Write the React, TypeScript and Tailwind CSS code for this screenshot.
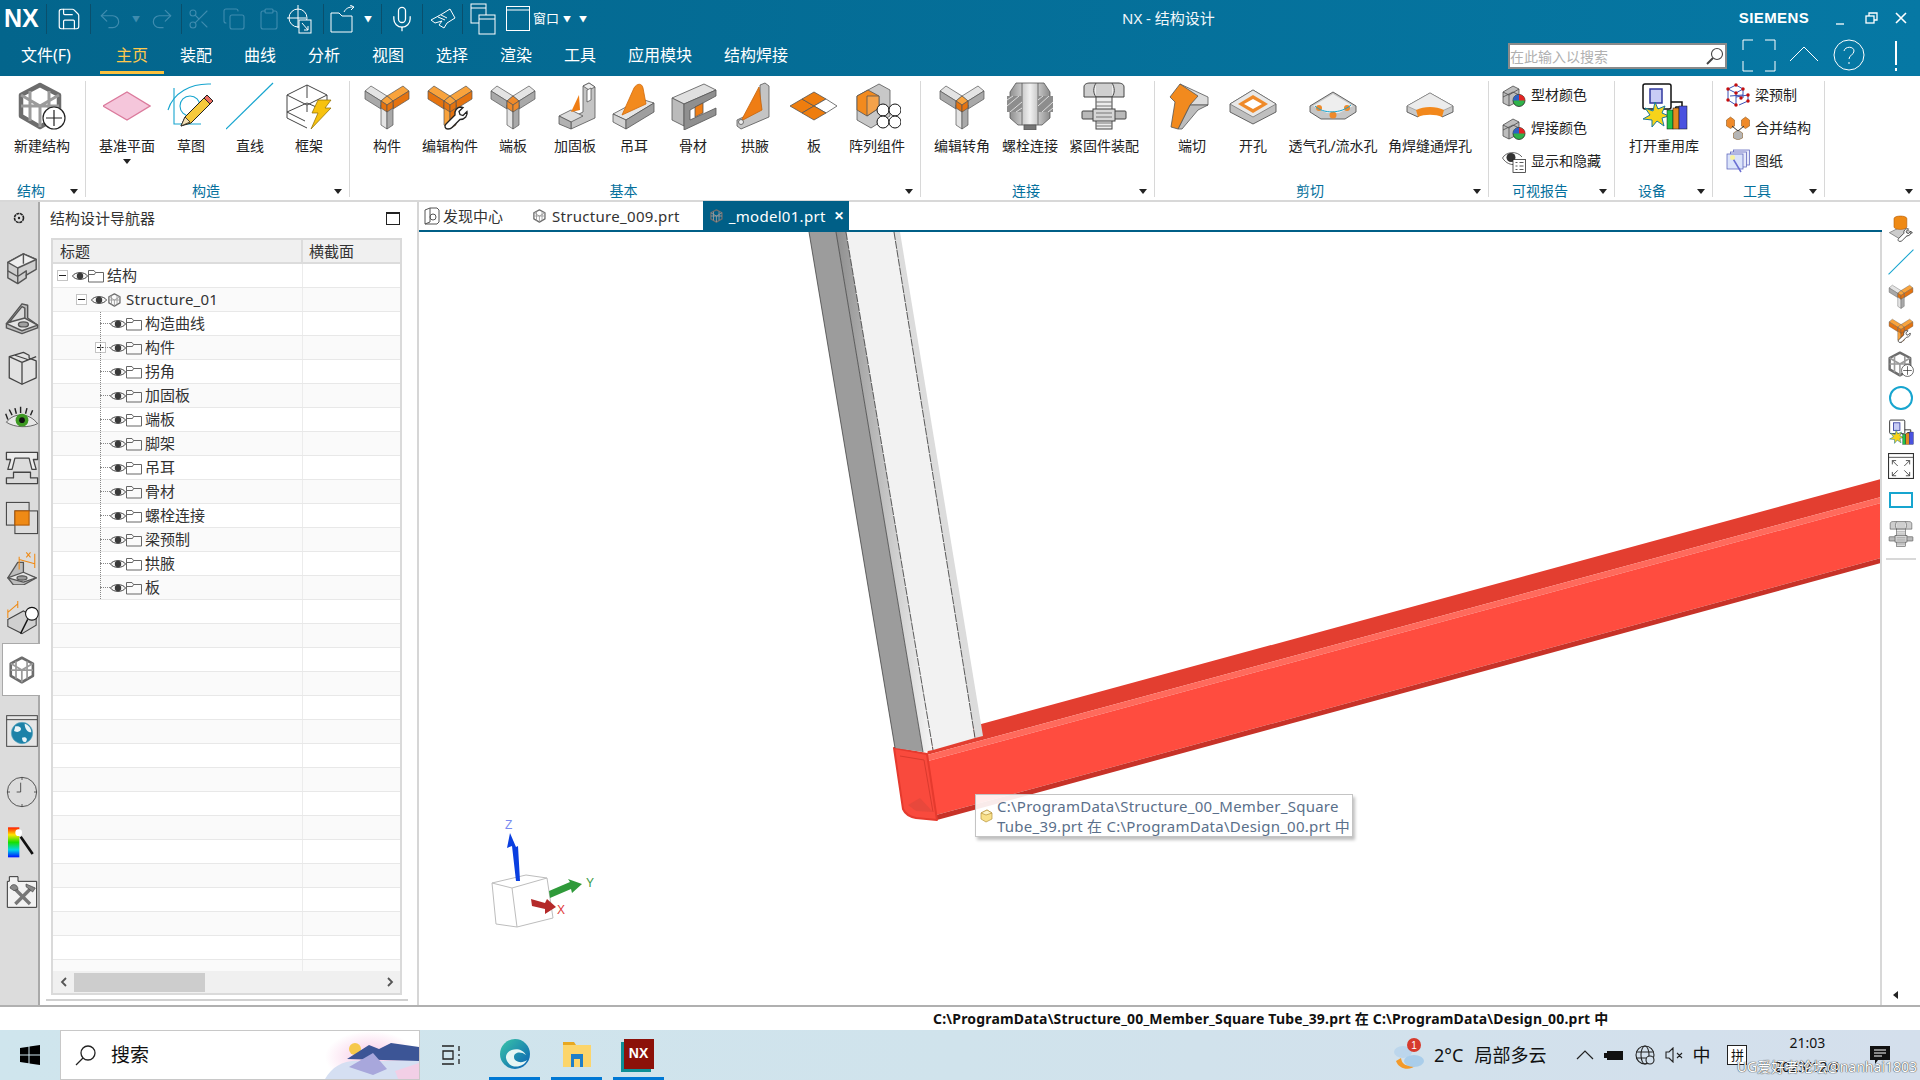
import type { ReactNode } from 'react';
import { Clipboard, Copy, Mic, Redo2, Save, Scissors, Undo2 } from 'lucide-react';

type Sz = { size?: number };

const ORANGE = ['#f9a33c', '#e5730f'];
const GRAY = ['#e4e4e4', '#a9a9a9'];

function Svg({ size = 48, children }: Sz & { children: ReactNode }) {
  return (
    <svg width={size} height={size} viewBox="0 0 48 48" className="shrink-0">
      {children}
    </svg>
  );
}

function YIcon({ left = GRAY, right = GRAY, down = GRAY, node = GRAY, wrench = false, size }: Sz & { left?: string[]; right?: string[]; down?: string[]; node?: string[]; wrench?: boolean }) {
  return (
    <Svg size={size}>
      <g stroke="#555" strokeWidth=".7" strokeLinejoin="round">
        <polygon points="2,9 8,4 24,14 18,19" fill={left[0]} />
        <polygon points="2,9 18,19 18,27 2,17" fill={left[1]} />
        <polygon points="46,9 40,4 24,14 30,19" fill={right[0]} />
        <polygon points="46,9 46,17 30,27 30,19" fill={right[1]} />
        <polygon points="18,23 24,27 24,47 18,43" fill={down[0]} />
        <polygon points="24,27 30,23 30,43 24,47" fill={down[1]} />
        <polygon points="18,19 24,14 30,19 24,23" fill={node[0]} />
        <polygon points="18,19 24,23 24,30 18,26" fill={node[1]} />
        <polygon points="24,23 30,19 30,26 24,30" fill={node[1]} />
      </g>
      {wrench && <WrenchMark />}
    </Svg>
  );
}

function WrenchMark() {
  return (
    <path d="M22 47c-3 0-4-3-2-5l9-9c-1-4 2-8 6-8l2 .5-4 4 1 3 3 1 4-4c1 4-2 8-7 8l-8 8c-1 1-2 1.500-4 1.500z" fill="#fff" stroke="#222" strokeWidth="1.300" />
  );
}

function FrameIcon({ plus = false, size }: Sz & { plus?: boolean }) {
  return (
    <Svg size={size}>
      <g fill="none" stroke="#6d6d6d" strokeWidth="4.500" strokeLinejoin="round">
        <path d="M22 3L41 13V34L22 45L3 34V13Z" />
      </g>
      <g fill="none" stroke="#9b9b9b" strokeWidth="3">
        <path d="M3 13L22 24L41 13M22 24V45M12 9V39M31 9V39M3 24H41" />
      </g>
      {plus && (
        <g>
          <circle cx="36" cy="36" r="11" fill="#fff" stroke="#222" strokeWidth="1.200" />
          <path d="M36 28V44M28 36H44" stroke="#222" strokeWidth="1.200" />
        </g>
      )}
    </Svg>
  );
}

const PlaneIcon = () => (
  <Svg>
    <polygon points="0,24 24,10 47,24 24,38" fill="#f5c6db" stroke="#db7a9c" strokeWidth="1.400" />
  </Svg>
);

const SketchIcon = () => (
  <Svg>
    <g fill="none" stroke="#17a5cf" strokeWidth="1.100">
      <path d="M1 28C6 11 24 1 44 2" />
      <circle cx="23" cy="24" r="10" />
      <path d="M7 6V42H34" />
    </g>
    <polygon points="14,44 18,35 37,16 43,22 24,41" fill="#f6c93c" stroke="#222" strokeWidth="1" />
    <polygon points="37,16 40,13 46,19 43,22" fill="#ec6d62" stroke="#222" strokeWidth="1" />
    <polygon points="14,44 18,35 23,40" fill="#f2e0b6" stroke="#222" strokeWidth=".8" />
  </Svg>
);

const LineIcon = () => (
  <Svg>
    <path d="M0 47L47 1" stroke="#17a5cf" strokeWidth="1.200" />
  </Svg>
);

const WireIcon = () => (
  <Svg>
    <g fill="none" stroke="#444" strokeWidth="1">
      <path d="M2 13L22 3L42 13L42 19M2 13V36L22 46M2 13L22 23L42 13M22 23V30M22 3V16M2 30L22 21L36 27M2 30L20 39" />
    </g>
    <polygon points="33,18 46,18 40,26 46,26 26,47 33,31 27,31" fill="#f7c20f" stroke="#8a6a00" strokeWidth=".7" />
  </Svg>
);

const GussetIcon = () => (
  <Svg>
    <g stroke="#555" strokeWidth=".8">
      <polygon points="32,4 38,1 44,5 44,36 20,47 20,36 32,30" fill="#c4c4c4" />
      <polygon points="32,4 38,8 44,5 38,1" fill="#eeeeee" />
      <polygon points="36,8 40,6 40,18 36,20" fill="#fff" />
      <polygon points="8,34 20,28 32,34 20,40" fill="#ddd" />
      <polygon points="8,34 20,40 20,47 8,42" fill="#b2b2b2" />
      <polygon points="20,30 28,13 29,28" fill="#ef7d14" stroke="none" />
    </g>
  </Svg>
);

const LugIcon = () => (
  <Svg>
    <g stroke="#555" strokeWidth=".8">
      <polygon points="3,32 31,17 44,21 16,38" fill="#e6e6e6" />
      <polygon points="3,32 16,38 16,47 3,40" fill="#d2d2d2" />
      <polygon points="16,38 44,21 44,30 16,47" fill="#9f9f9f" />
      <path d="M12 33L24 6C27 1 32 1 33 6L36 22Z" fill="#f28a1e" stroke="#d06a0a" />
    </g>
  </Svg>
);

const BeamIcon = () => (
  <Svg>
    <g stroke="#555" strokeWidth=".8">
      <polygon points="3,16 35,2 47,8 15,22" fill="#e0e0e0" />
      <polygon points="3,16 15,22 15,44 3,38" fill="#bbb" />
      <polygon points="15,22 47,8 47,14 21,28 21,38 47,26 47,33 15,48" fill="#8f8f8f" />
      <polygon points="26,25 34,21 34,31 26,35" fill="#ef7d14" />
    </g>
  </Svg>
);

const HaunchIcon = () => (
  <Svg>
    <g stroke="#555" strokeWidth=".8">
      <polygon points="29,3 34,1 38,4 38,35 10,47 6,44 6,38 29,27" fill="#c4c4c4" />
      <polygon points="10,39 28,5 31,28" fill="#ef7d14" stroke="#c5630a" />
      <circle cx="10" cy="40" r="2.500" fill="#eee" />
    </g>
  </Svg>
);

const PlateIcon = () => (
  <Svg>
    <g stroke="#555" strokeWidth=".8">
      <polygon points="0,24 12,17 24,24 12,31" fill="#ee7d0e" />
      <polygon points="12,17 24,10 36,17 24,24" fill="#ee7d0e" />
      <polygon points="24,24 36,17 47,24 36,31" fill="#fff" />
      <polygon points="12,31 24,24 36,31 24,38" fill="#ee7d0e" />
    </g>
  </Svg>
);

const ArrayIcon = () => (
  <Svg>
    <g stroke="#555" strokeWidth=".8">
      <polygon points="4,14 26,2 37,8 37,34 18,46 4,38" fill="#c8c8c8" />
      <polygon points="4,14 15,8 26,14 26,26 14,34 4,28" fill="#f28a1e" />
      <polygon points="14,14 26,14 26,26 14,34" fill="#f4a24a" />
    </g>
    <g fill="#fff" stroke="#111" strokeWidth="1">
      <circle cx="30" cy="28" r="6" />
      <circle cx="42" cy="28" r="6" />
      <circle cx="30" cy="40" r="6" />
      <circle cx="42" cy="40" r="6" />
    </g>
  </Svg>
);

const ConnectIcon = () => (
  <Svg>
    <defs>
      <linearGradient id="bolt-g" x1="0" x2="1" y1="0" y2="0">
        <stop offset="0" stopColor="#8f8f8f" />
        <stop offset=".5" stopColor="#f1f1f1" />
        <stop offset="1" stopColor="#8a8a8a" />
      </linearGradient>
    </defs>
    <g stroke="#555" strokeWidth=".8">
      <polygon points="10,1 38,1 44,10 44,36 36,43 12,43 4,36 4,10" fill="url(#bolt-g)" />
      <rect x="18" y="43" width="12" height="5" fill="#777" />
      <path d="M16 1V43M32 1V43" fill="none" />
    </g>
    <rect x="1" y="14" width="15" height="16" fill="#8d8d8d" />
    <rect x="32" y="14" width="15" height="16" fill="#8d8d8d" />
    <path d="M1 18L7 14M1 24L13 14M4 30L16 20M10 30L16 26M32 18L37 14M32 24L43 14M36 30L47 20M42 30L47 26" stroke="#ddd" strokeWidth="1" />
  </Svg>
);

function FastenerIcon({ size }: Sz) {
  return (
    <Svg size={size}>
      <g stroke="#444" strokeWidth="1">
        <path d="M4 15V5C4 2 7 1 10 1H38C41 1 44 2 44 5V15Z" fill="#cfcfcf" />
        <path d="M16 1C13 6 13 11 16 15M32 1C35 6 35 11 32 15" fill="#ececec" />
        <rect x="16" y="15" width="16" height="32" fill="#ececec" />
        <rect x="2" y="29" width="44" height="8" rx="1" fill="#b9b9b9" />
        <rect x="13" y="27" width="22" height="12" fill="#d6d6d6" />
      </g>
      <path d="M16 20H32M16 24H32M16 31H32M16 35H32M16 41H32M16 44H32" stroke="#777" />
    </Svg>
  );
}

const EndCutIcon = () => (
  <Svg>
    <g stroke="#555" strokeWidth=".8">
      <polygon points="12,2 40,15 40,23 22,23" fill="#dcdcdc" />
      <polygon points="22,23 40,23 30,28 14,47 10,47" fill="#bdbdbd" />
      <polygon points="2,15 12,2 30,14 22,23 10,47 3,45 7,20" fill="#f28a1e" />
    </g>
  </Svg>
);

const HoleIcon = () => (
  <Svg>
    <polygon points="1,22 24,8 47,22 47,30 24,42 1,30" fill="#bfbfbf" stroke="#555" strokeWidth=".9" />
    <polygon points="1,22 24,8 47,22 24,35" fill="#e8e8e8" stroke="#555" strokeWidth=".6" />
    <polygon points="9,22 24,13 39,22 24,31" fill="#ef8a2a" />
    <polygon points="15,22 24,17 33,22 24,27" fill="#fff" />
  </Svg>
);

const VentIcon = () => (
  <Svg>
    <polygon points="1,24 24,10 47,24 47,30 36,37 12,37 1,30" fill="#c6c6c6" stroke="#555" strokeWidth=".9" />
    <polygon points="4,24 24,12 44,24 30,31 18,31" fill="#eeeeee" />
    <circle cx="10" cy="26" r="3" fill="#ef8a2a" />
    <circle cx="24" cy="33" r="3.500" fill="#ef8a2a" />
    <circle cx="38" cy="26" r="3" fill="#ef8a2a" />
    <path d="M6 24C14 32 32 32 42 23" fill="none" stroke="#17a5cf" strokeWidth="1" />
  </Svg>
);

const WeldHoleIcon = () => (
  <Svg>
    <polygon points="1,24 24,11 47,24 47,30 36,35 32,29 16,29 12,35 1,30" fill="#c9c9c9" stroke="#555" strokeWidth=".9" />
    <polygon points="1,24 24,11 47,24 36,29 12,29" fill="#ececec" stroke="#777" strokeWidth=".5" />
    <path d="M10 28C18 24 30 24 38 28L36 35C30 32 18 32 12 35Z" fill="#f2881c" />
  </Svg>
);

function PieCubes() {
  return (
    <Svg size={24}>
      <g stroke="#444" strokeWidth="1.500">
        <polygon points="2,18 22,6 34,12 34,36 14,46 2,40" fill="#bdbdbd" />
        <path d="M2 28L22 18L34 24M14 24V46M2 18L14 24L34 12" fill="none" />
      </g>
      <circle cx="34" cy="35" r="12" fill="#2fb24a" stroke="#222" strokeWidth="1.500" />
      <path d="M34 35V23A12 12 0 0 1 46 35Z" fill="#e32424" />
      <path d="M34 35L22 35A12 12 0 0 1 34 23Z" fill="#2f5fc4" />
    </Svg>
  );
}

function EyeList() {
  return (
    <Svg size={24}>
      <path d="M1 18C8 5 30 3 40 16" fill="none" stroke="#333" strokeWidth="1.500" />
      <path d="M1 18C8 29 18 32 26 31" fill="none" stroke="#333" strokeWidth="1.500" />
      <circle cx="18" cy="17" r="9" fill="#333" />
      <rect x="22" y="21" width="25" height="26" fill="#fff" stroke="#222" strokeWidth="1.500" />
      <path d="M27 27H31M35 27H43M27 34H31M35 34H43M27 41H31M35 41H43" stroke="#222" strokeWidth="1.500" />
    </Svg>
  );
}

function Lattice() {
  return (
    <Svg size={24}>
      <g fill="none" stroke="#3c50b4" strokeWidth="2">
        <path d="M4 12L20 4L34 12L20 20ZM4 12V34L20 44V20M34 12V30M20 28L44 24V36L26 44M8 26L34 24" />
      </g>
      <g fill="#c40d0d">
        <circle cx="4" cy="12" r="3.500" />
        <circle cx="20" cy="4" r="3.500" />
        <circle cx="34" cy="12" r="3.500" />
        <circle cx="20" cy="20" r="3.500" />
        <circle cx="4" cy="34" r="3.500" />
        <circle cx="20" cy="44" r="3.500" />
        <circle cx="44" cy="24" r="3.500" />
        <circle cx="44" cy="36" r="3.500" />
        <circle cx="30" cy="30" r="3.500" />
      </g>
    </Svg>
  );
}

function MergeCubes() {
  return (
    <Svg size={24}>
      <g stroke="#7a4a10" strokeWidth="1">
        <polygon points="1,8 9,2 17,8 17,20 9,25 1,20" fill="#ef8a2a" />
        <polygon points="31,8 39,2 47,8 47,20 39,25 31,20" fill="#ef8a2a" />
        <polygon points="15,34 24,28 33,34 33,44 24,48 15,44" fill="#b5b5b5" />
      </g>
      <path d="M12 20L24 30L36 20" fill="none" stroke="#333" strokeWidth="2" />
    </Svg>
  );
}

function Sheets() {
  return (
    <Svg size={24}>
      <g stroke="#5a62bb" strokeWidth="1.500" fill="#e8ebfa">
        <rect x="15" y="2" width="32" height="30" />
        <rect x="9" y="6" width="32" height="30" />
        <rect x="2" y="10" width="32" height="30" fill="#dbe4fb" />
      </g>
      <path d="M12 16L30 46" stroke="#6a6fd2" strokeWidth="3" />
      <circle cx="13" cy="17" r="5" fill="#f7f2a0" />
    </Svg>
  );
}

const LibraryIcon = ({ size }: Sz) => (
  <Svg size={size}>
    <rect x="3" y="2" width="28" height="25" rx="2" fill="#fff" stroke="#111" strokeWidth="1.500" />
    <rect x="10" y="7" width="12" height="14" fill="#c8ccf5" stroke="#30389e" strokeWidth="1.500" />
    <path d="M31 20H42V25H36L33 31" fill="none" stroke="#111" strokeWidth="1.500" />
    <polygon points="15,20 18,27 25,24 22,31 29,34 22,36 24,44 17,39 12,45 12,38 3,37 10,33 5,26 13,29" fill="#f7d31a" stroke="#157a9e" strokeWidth="1" />
    <rect x="27" y="28" width="6" height="19" fill="#23c24a" stroke="#111" strokeWidth=".5" />
    <rect x="33" y="26" width="6" height="21" fill="#e48a1f" stroke="#111" strokeWidth=".5" />
    <rect x="39" y="24" width="8" height="23" fill="#4a52e0" stroke="#111" strokeWidth=".5" />
  </Svg>
);

function Tool({ label, w, icon, drop }: { label: string; w: string; icon: ReactNode; drop?: boolean }) {
  return (
    <div className={`flex flex-col items-center ${w}`}>
      <div className="mt-px flex h-[48px] w-full items-center justify-center">{icon}</div>
      <div className="mt-[6px] h-[20px] whitespace-nowrap text-[14px] leading-[20px] text-[#222]">{label}</div>
      {drop && <div className="mt-[3px] h-0 w-0 border-x-[4px] border-t-[5px] border-x-transparent border-t-[#222]" />}
    </div>
  );
}

function Group({ label, w, pad, children, noCaret }: { label: string; w: string; pad: string; children: ReactNode; noCaret?: boolean }) {
  return (
    <div className={`mt-[5px] flex h-[116px] shrink-0 flex-col border-r border-[#d8d8d8] ${w}`}>
      <div className={`flex min-h-0 flex-1 ${pad}`}>{children}</div>
      <div className="flex h-[16px] translate-y-[2px] items-center">
        <div className="flex-1 text-center text-[14px] leading-[16px] text-[#046f9c]">{label}</div>
        <div className="flex w-[23px] justify-center">
          {!noCaret && <div className="h-0 w-0 border-x-[4px] border-t-[5px] border-x-transparent border-t-[#222]" />}
        </div>
      </div>
    </div>
  );
}

function SmallTool({ label, icon }: { label: string; icon: ReactNode }) {
  return (
    <div className="flex h-[33px] shrink-0 items-center gap-[5px] whitespace-nowrap text-[14px] text-[#222]">
      {icon}
      <span>{label}</span>
    </div>
  );
}

const menus = [
  { t: '主页', w: 'w-[64px] text-[#ffc94d] border-[#fcc13e]' },
  { t: '装配', w: 'w-[64px] border-transparent' },
  { t: '曲线', w: 'w-[64px] border-transparent' },
  { t: '分析', w: 'w-[64px] border-transparent' },
  { t: '视图', w: 'w-[64px] border-transparent' },
  { t: '选择', w: 'w-[64px] border-transparent' },
  { t: '渲染', w: 'w-[64px] border-transparent' },
  { t: '工具', w: 'w-[64px] border-transparent' },
  { t: '应用模块', w: 'w-[96px] border-transparent' },
  { t: '结构焊接', w: 'w-[96px] border-transparent' },
];

function TitleBar() {
  const sep = <div className="h-[30px] w-px shrink-0 bg-[#0a4f6c]" />;
  const dim = '#3f8caf';
  return (
    <div className="flex h-[40px] items-center whitespace-nowrap pb-[3px] text-white">
      <div className="w-[46px] shrink-0 pl-[4px] font-['Liberation_Sans'] text-[25px] font-bold leading-none">NX</div>
      {sep}
      <div className="flex w-[43px] shrink-0 justify-center"><Save size={26} strokeWidth={1.1} /></div>
      {sep}
      <div className="flex w-[90px] shrink-0 items-center justify-between px-[6px]" style={{ color: dim }}>
        <Undo2 size={26} strokeWidth={1.1} />
        <span className="text-[8px]">▼</span>
        <Redo2 size={26} strokeWidth={1.1} />
      </div>
      {sep}
      <div className="flex w-[104px] shrink-0 items-center justify-around" style={{ color: dim }}>
        <Scissors size={24} strokeWidth={1.1} />
        <Copy size={24} strokeWidth={1.1} />
        <Clipboard size={24} strokeWidth={1.1} />
      </div>
      <div className="flex w-[37px] shrink-0 justify-start">
        <svg width="26" height="30" viewBox="0 0 26 30" fill="none" stroke="#fff" strokeWidth="1">
          <circle cx="12" cy="14" r="9" />
          <path d="M12 1V24M1 14H20" />
          <rect x="13" y="16" width="12" height="13" fill="#04678f" />
          <path d="M16 19L22 26M22 22V26H18" />
        </svg>
      </div>
      {sep}
      <div className="flex w-[57px] shrink-0 items-center justify-between pl-[6px] pr-[9px]">
        <svg width="26" height="28" viewBox="0 0 26 28" fill="none" stroke="#fff" strokeWidth="1">
          <path d="M1 8V27H22V11H12L9 8ZM14 7C16 3 19 2 23 2M20 0L24 2L21 5" />
        </svg>
        <span className="text-[8px]">▼</span>
      </div>
      {sep}
      <div className="flex w-[40px] shrink-0 justify-center"><Mic size={28} strokeWidth={1.1} /></div>
      {sep}
      <div className="flex w-[39px] shrink-0 justify-center">
        <svg width="26" height="22" viewBox="0 0 26 22" fill="none" stroke="#fff" strokeWidth="1">
          <path d="M1 12L12 6L20 1L25 10L17 15L14 20L9 17L12 13L5 15Z" />
          <path d="M8 9L15 12M11 7L17 10" />
        </svg>
      </div>
      {sep}
      <div className="flex w-[40px] shrink-0 justify-center">
        <svg width="26" height="32" viewBox="0 0 26 32" fill="none" stroke="#fff" strokeWidth="1">
          <rect x="1" y="1" width="15" height="19" fill="#04678f" />
          <path d="M1 5H16" />
          <rect x="9" y="12" width="16" height="19" fill="#04678f" />
          <path d="M9 16H25" />
        </svg>
      </div>
      <div className="flex w-[27px] shrink-0 justify-end">
        <svg width="24" height="25" viewBox="0 0 24 25" fill="none" stroke="#fff" strokeWidth="1">
          <rect x=".5" y=".5" width="23" height="24" />
          <path d="M1 4H23" />
        </svg>
      </div>
      <span className="ml-[3px] shrink-0 text-[13px]">窗口</span>
      <span className="ml-[4px] shrink-0 text-[8px]">▼</span>
      <span className="ml-[8px] shrink-0 text-[8px]">▼</span>
      <div className="ml-[535px] shrink-0 text-[15px] text-[#f2f7fa]">NX - 结构设计</div>
      <div className="ml-[524px] shrink-0 font-['Liberation_Sans'] text-[15px] font-bold tracking-[.4px]">SIEMENS</div>
      <svg width="105" height="20" viewBox="0 0 105 20" className="shrink-0" fill="none" stroke="#fff" strokeWidth="1.300">
        <path d="M27 15H35" />
        <rect x="57" y="7" width="8" height="7" />
        <path d="M60 7V4H68V11H65" />
        <path d="M87 4L97 14M97 4L87 14" strokeWidth="1.600" />
      </svg>
    </div>
  );
}

function MenuBar() {
  return (
    <div className="flex h-[36px] items-start text-white">
      <div className="mt-[3px] w-[100px] pl-[21px] text-[16px] leading-[24px]">文件(F)</div>
      {menus.map((m) => (
        <div key={m.t} className={`h-[34px] border-b-[3px] pt-[3px] text-center text-[16px] leading-[24px] ${m.w}`}>{m.t}</div>
      ))}
      <div className="ml-[704px] mt-[3px] flex h-[26px] w-[219px] items-center justify-between border-2 border-[#8a8a8a] bg-white pr-[1px] text-[14px] text-[#b0b0b0]">
        <span className="whitespace-nowrap">在此输入以搜索</span>
        <svg width="18" height="18" viewBox="0 0 18 18" fill="none" stroke="#444" strokeWidth="1.100">
          <circle cx="11" cy="7" r="5.500" />
          <path d="M7 11L1 17" strokeWidth="2" />
        </svg>
      </div>
      <svg width="185" height="36" viewBox="0 0 185 36" className="-mt-[1px]" fill="none" stroke="#fff" strokeWidth="1">
        <path d="M16 11V1H26M38 1H48V11M48 22V32H38M26 32H16V22" />
        <path d="M63 22L77 8L91 22" />
        <circle cx="122" cy="16" r="15" />
        <path d="M117 12C118 7 127 7 127 12C127 16 122 16 122 20M122 23V25" />
        <path d="M169 2V26M169 29V32" strokeWidth="2" />
      </svg>
    </div>
  );
}

function Ribbon() {
  const gray = GRAY;
  return (
    <div className="flex h-[126px] shrink-0 border-b-2 border-[#d8d8d8] bg-white">
      <Group label="结构" w="w-[86px]" pad="pl-[6px]">
        <Tool label="新建结构" w="w-[72px]" icon={<FrameIcon plus />} />
      </Group>
      <Group label="构造" w="w-[264px]" pad="pl-[9px]">
        <Tool label="基准平面" w="w-[64px]" icon={<PlaneIcon />} drop />
        <Tool label="草图" w="w-[64px]" icon={<SketchIcon />} />
        <Tool label="直线" w="w-[54px]" icon={<LineIcon />} />
        <Tool label="框架" w="w-[64px]" icon={<WireIcon />} />
      </Group>
      <Group label="基本" w="w-[571px]" pad="pl-[5px]">
        <Tool label="构件" w="w-[64px]" icon={<YIcon right={ORANGE} node={ORANGE} />} />
        <Tool label="编辑构件" w="w-[62px]" icon={<YIcon left={ORANGE} right={ORANGE} down={ORANGE} node={ORANGE} wrench />} />
        <Tool label="端板" w="w-[64px]" icon={<YIcon left={gray} node={['#ef8a2a', '#ef8a2a']} />} />
        <Tool label="加固板" w="w-[60px]" icon={<GussetIcon />} />
        <Tool label="吊耳" w="w-[58px]" icon={<LugIcon />} />
        <Tool label="骨材" w="w-[60px]" icon={<BeamIcon />} />
        <Tool label="拱腋" w="w-[64px]" icon={<HaunchIcon />} />
        <Tool label="板" w="w-[54px]" icon={<PlateIcon />} />
        <Tool label="阵列组件" w="w-[72px]" icon={<ArrayIcon />} />
      </Group>
      <Group label="连接" w="w-[234px]" pad="pl-[5px]">
        <Tool label="编辑转角" w="w-[72px]" icon={<YIcon node={ORANGE} />} />
        <Tool label="螺栓连接" w="w-[64px]" icon={<ConnectIcon />} />
        <Tool label="紧固件装配" w="w-[84px]" icon={<FastenerIcon />} />
      </Group>
      <Group label="剪切" w="w-[334px]" pad="pl-[5px]">
        <Tool label="端切" w="w-[64px]" icon={<EndCutIcon />} />
        <Tool label="开孔" w="w-[58px]" icon={<HoleIcon />} />
        <Tool label="透气孔/流水孔" w="w-[102px]" icon={<VentIcon />} />
        <Tool label="角焊缝通焊孔" w="w-[92px]" icon={<WeldHoleIcon />} />
      </Group>
      <Group label="可视报告" w="w-[126px]" pad="-mt-[3px] flex-col pl-[13px]">
        <SmallTool label="型材颜色" icon={<PieCubes />} />
        <SmallTool label="焊接颜色" icon={<PieCubes />} />
        <SmallTool label="显示和隐藏" icon={<EyeList />} />
      </Group>
      <Group label="设备" w="w-[98px]" pad="pl-[5px]">
        <Tool label="打开重用库" w="w-[88px]" icon={<LibraryIcon />} />
      </Group>
      <Group label="工具" w="w-[112px]" pad="-mt-[3px] flex-col pl-[13px]">
        <SmallTool label="梁预制" icon={<Lattice />} />
        <SmallTool label="合并结构" icon={<MergeCubes />} />
        <SmallTool label="图纸" icon={<Sheets />} />
      </Group>
      <div className="flex flex-1 items-end justify-end pb-[6px] pr-[7px]">
        <div className="h-0 w-0 border-x-[4px] border-t-[5px] border-x-transparent border-t-[#222]" />
      </div>
    </div>
  );
}

const railIcons: ReactNode[] = [
  <Svg size={34} key="a">
    <g stroke="#555" strokeWidth="2" strokeLinejoin="round">
      <polygon points="4,16 26,4 44,12 44,26 30,34 30,38 18,46 4,38" fill="#cfcfcf" />
      <polygon points="4,16 26,4 44,12 18,24" fill="#efefef" />
      <path d="M18 24V46M4 28L18 36L30 28V36M26 4V18" fill="none" />
    </g>
  </Svg>,
  <Svg size={34} key="b">
    <g stroke="#555" strokeWidth="2" strokeLinejoin="round">
      <polygon points="2,32 24,4 32,6 32,24 46,34 46,38 24,46 2,38" fill="#bdbdbd" />
      <polygon points="2,32 24,22 46,34 24,42" fill="#e4e4e4" />
      <polygon points="6,30 24,8 28,10 28,24" fill="#d9d9d9" />
      <ellipse cx="26" cy="33" rx="7" ry="3.500" fill="#a0a0a0" />
    </g>
  </Svg>,
  <Svg size={34} key="c">
    <g fill="#e2e2e2" stroke="#444" strokeWidth="1.800" strokeLinejoin="round">
      <path d="M6 8L26 2L34 6V10L44 14V38L24 47L6 38Z" />
      <path d="M6 8L24 16V47M14 6L32 12M24 16L44 8" fill="none" />
    </g>
  </Svg>,
  <Svg size={34} key="d">
    <path d="M2 30C12 16 34 16 46 32C34 38 14 38 2 30Z" fill="#e8e8e8" stroke="#333" />
    <circle cx="24" cy="27" r="9" fill="#3e9a23" />
    <circle cx="24" cy="27" r="4" fill="#111" />
    <path d="M4 26L1 18M10 20L6 12M16 18L14 10M22 17V8M29 18L31 10M36 20L39 13" stroke="#222" strokeWidth="2" />
  </Svg>,
  <Svg size={34} key="e">
    <g fill="#ececec" stroke="#444" strokeWidth="1.800" strokeLinejoin="round">
      <path d="M2 2H46V12H40L44 26H38L34 10H14L10 26H4L8 12H2Z" />
      <path d="M2 46V38H12V30H36V38H46V46Z" fill="#dadada" />
    </g>
  </Svg>,
  <Svg size={34} key="f">
    <rect x="2" y="2" width="32" height="32" fill="#dcdcdc" stroke="#444" strokeWidth="1.500" />
    <rect x="14" y="14" width="32" height="32" fill="#dcdcdc" stroke="#444" strokeWidth="1.500" />
    <rect x="14" y="14" width="20" height="20" fill="#ef8a15" stroke="#b25a05" strokeWidth="1.500" />
  </Svg>,
  <Svg size={34} key="g">
    <g stroke="#555" strokeWidth="1.800" strokeLinejoin="round">
      <polygon points="4,38 18,16 26,16 26,32 44,38 26,48 12,48" fill="#bdbdbd" />
      <polygon points="4,38 26,30 44,38 26,44" fill="#e6e6e6" />
      <ellipse cx="24" cy="38" rx="7" ry="3" fill="#999" />
    </g>
    <path d="M20 8V26M42 4V24M20 12L42 18M30 2L36 9M36 2L30 9" stroke="#ef8a15" strokeWidth="1.500" fill="none" />
  </Svg>,
  <Svg size={34} key="h">
    <polygon points="4,26 26,14 44,24 44,34 24,46 4,36" fill="#d0d0d0" stroke="#444" strokeWidth="1.500" />
    <path d="M4 16L18 4M4 12V24M18 0V10" stroke="#ef8a15" strokeWidth="1.500" />
    <circle cx="38" cy="18" r="9" fill="#fff" stroke="#111" strokeWidth="1.500" />
    <path d="M32 26L22 46" stroke="#111" strokeWidth="2" />
  </Svg>,
];

const lowerIcons: ReactNode[] = [
  <Svg size={32} key="web">
    <rect x="1" y="1" width="46" height="46" fill="#e6e6e6" stroke="#444" strokeWidth="1.500" />
    <path d="M1 7H47" stroke="#444" strokeWidth="1.500" />
    <circle cx="24" cy="27" r="16" fill="#1d82a8" stroke="#5fa9c2" />
    <path d="M14 17C20 16 24 19 22 23C18 27 14 25 12 24ZM28 13C34 15 38 20 38 26C32 26 28 20 28 13ZM24 34C28 32 34 34 30 40C26 42 24 38 24 34Z" fill="#e9f4f8" />
  </Svg>,
  <Svg size={32} key="clock">
    <circle cx="24" cy="24" r="22" fill="none" stroke="#333" strokeWidth="1.200" />
    <path d="M24 2V6M24 42V46M2 24H6M42 24H46M22 10V24H16" fill="none" stroke="#333" strokeWidth="1.200" />
  </Svg>,
  <Svg size={32} key="color">
    <defs>
      <linearGradient id="spectrum" x1="0" x2="0" y1="0" y2="1">
        <stop offset="0" stopColor="#ff1a00" />
        <stop offset=".25" stopColor="#ffe600" />
        <stop offset=".5" stopColor="#16e000" />
        <stop offset=".75" stopColor="#00d8e6" />
        <stop offset="1" stopColor="#0010ff" />
      </linearGradient>
    </defs>
    <rect x="3" y="2" width="17" height="45" fill="url(#spectrum)" />
    <path d="M22 16L40 42" stroke="#111" strokeWidth="4" />
    <circle cx="19" cy="10" r="5" fill="#fff" />
  </Svg>,
  <Svg size={32} key="tools">
    <path d="M2 8H5V1H18V8H46V47H2Z" fill="#f2f2f2" stroke="#333" strokeWidth="1.500" />
    <path d="M12 18L36 42M38 18L14 42" stroke="#777" strokeWidth="5" />
    <path d="M6 18C8 10 18 12 18 20L12 22ZM30 12L44 18L40 24L30 16Z" fill="#888" stroke="#444" />
  </Svg>,
];

function LeftRail() {
  const row = 'flex h-[50px] items-center justify-center pl-[6px]';
  return (
    <div className="flex w-[40px] shrink-0 flex-col border-r-2 border-[#a9a9a9] bg-[#dcdcdc]">
      <div className="flex h-[31px] items-center justify-center">
        <svg width="14" height="14" viewBox="0 0 14 14" fill="none" stroke="#222" strokeWidth="1.600">
          <circle cx="7" cy="7" r="4.500" strokeDasharray="3 .6" />
          <circle cx="7" cy="7" r="1.200" fill="#222" stroke="none" />
        </svg>
      </div>
      <div className="h-[10px]" />
      {railIcons.map((icon, i) => (
        <div key={i} className={row}>{icon}</div>
      ))}
      <div className="relative z-10 -mr-[2px] ml-[2px] flex h-[53px] items-center justify-center border-y border-l border-[#a9a9a9] bg-white pl-[2px]">
        <FrameIcon size={28} />
      </div>
      <div className={`mt-[10px] ${row}`}>{lowerIcons[0]}</div>
      <div className={`mt-[11px] ${row}`}>{lowerIcons[1]}</div>
      <div className={row}>{lowerIcons[2]}</div>
      <div className={row}>{lowerIcons[3]}</div>
    </div>
  );
}

const Eye = () => (
  <svg width="16" height="12" viewBox="0 0 16 12" className="shrink-0">
    <path d="M.5 6C3 1.500 13 1.500 15.500 6C13 10.500 3 10.500 .5 6Z" fill="#f4f4f4" stroke="#444" />
    <circle cx="8" cy="6" r="3.200" fill="#3a3a3a" />
  </svg>
);

const Folder = () => (
  <svg width="16" height="14" viewBox="0 0 16 14" fill="none" stroke="#666" className="shrink-0">
    <path d="M.5 13V1.500H6L7.500 3.500H15.500V13ZM.5 5.500H6.500L7.500 3.500" />
  </svg>
);

const Toggle = ({ open }: { open: boolean }) => (
  <div className="z-10 flex h-[11px] w-[11px] items-center justify-center border border-[#c4c4c4] bg-white text-[11px] leading-none text-[#222]">
    <svg width="9" height="9" viewBox="0 0 9 9" stroke="#222">
      <path d="M1 4.500H8" />
      {!open && <path d="M4.500 1V8" />}
    </svg>
  </div>
);

const folders = ['构造曲线', '构件', '拐角', '加固板', '端板', '脚架', '吊耳', '骨材', '螺栓连接', '梁预制', '拱腋', '板'];

function Row({ odd, children }: { odd: boolean; children?: ReactNode }) {
  return (
    <div className={`flex h-[24px] shrink-0 border-b border-[#e8e8e8] ${odd ? 'bg-[#fafafa]' : 'bg-white'}`}>
      <div className="relative flex w-[250px] items-center border-r border-[#ececec] text-[15px] text-[#333]">{children}</div>
    </div>
  );
}

function Navigator() {
  const blanks = Array.from({ length: 15 + 1 }, (_, i) => i);
  return (
    <div className="flex w-[379px] shrink-0 flex-col border-r-2 border-[#d6d6d6] bg-white">
      <div className="flex h-[33px] items-center justify-between pl-[10px] pr-[17px]">
        <span className="text-[15px] text-[#333]">结构设计导航器</span>
        <div className="h-[13px] w-[14px] border border-t-2 border-[#222]" />
      </div>
      <div className="ml-[11px] mt-[3px] flex h-[757px] w-[351px] flex-col border-2 border-[#dadada]">
        <div className="flex h-[24px] shrink-0 border-b-2 border-[#dcdcdc] bg-[#f0f0f0] text-[15px] leading-[22px] text-[#333]">
          <div className="w-[250px] border-r-2 border-[#dcdcdc] pl-[7px]">标题</div>
          <div className="pl-[6px]">横截面</div>
        </div>
        <div className="flex min-h-0 flex-1 flex-col overflow-hidden">
          <Row odd={false}>
            <div className="ml-[4px]"><Toggle open /></div>
            <div className="ml-[4px] flex items-center"><Eye /><Folder /></div>
            <span className="ml-[3px]">结构</span>
          </Row>
          <Row odd>
            <div className="ml-[23px]"><Toggle open /></div>
            <div className="ml-[4px] flex items-center gap-[1px]"><Eye /><FrameIcon size={14} /></div>
            <span className="ml-[4px] tracking-[.25px]">Structure_01</span>
          </Row>
          {folders.map((f, i) => (
            <Row key={f} odd={i % 2 === 1}>
              <div className="absolute left-[47px] top-0 h-full border-l border-dotted border-[#888]" />
              <div className="absolute left-[47px] top-[11px] w-[10px] border-t border-dotted border-[#888]" />
              <div className="ml-[42px] w-[11px]">{i === 1 && <Toggle open={false} />}</div>
              <div className="ml-[4px] flex items-center"><Eye /><Folder /></div>
              <span className="ml-[3px]">{f}</span>
            </Row>
          ))}
          {blanks.map((i) => (
            <Row key={i} odd={i % 2 === 1} />
          ))}
        </div>
        <div className="flex h-[22px] shrink-0 items-center bg-[#f0f0f0]">
          <span className="flex w-[21px] justify-center">
            <svg width="8" height="10" viewBox="0 0 8 10" fill="none" stroke="#555" strokeWidth="1.800"><path d="M6 1L2 5L6 9" /></svg>
          </span>
          <div className="h-[19px] w-[131px] bg-[#cdcdcd]" />
          <span className="ml-auto flex w-[20px] justify-center">
            <svg width="8" height="10" viewBox="0 0 8 10" fill="none" stroke="#555" strokeWidth="1.800"><path d="M2 1L6 5L2 9" /></svg>
          </span>
        </div>
      </div>
      <div className="ml-[6px] mt-[4px] h-[2px] w-[362px] bg-[#d0d0d0]" />
    </div>
  );
}

function Tabs() {
  return (
    <div className="flex h-[30px] shrink-0 items-start border-b-2 border-[#005f87] bg-white text-[15px] leading-[28px] text-[#333]">
      <div className="ml-[5px] flex items-center gap-[3px]">
        <svg width="16" height="18" viewBox="0 0 16 18" fill="none" stroke="#555">
          <path d="M1 3L6 1V15L1 17ZM6 1H13L15 3V15L13 17H1" />
          <circle cx="9" cy="10" r="3" />
        </svg>
        <span>发现中心</span>
      </div>
      <div className="ml-[30px] flex items-center gap-[5px]">
        <FrameIcon size={14} />
        <span className="tracking-[.3px]">Structure_009.prt</span>
      </div>
      <div className="-mt-px ml-[23px] flex h-[29px] w-[146px] items-center gap-[5px] bg-[#005f87] pl-[7px] text-white">
        <FrameIcon size={14} />
        <span className="tracking-[.3px]">_model01.prt</span>
        <span className="ml-[3px] text-[12px] font-bold">✕</span>
      </div>
    </div>
  );
}

function Canvas() {
  return (
    <div className="relative min-h-0 flex-1 overflow-hidden border-r-2 border-[#d8d8d8] bg-white">
      <svg width="1462" height="774" viewBox="419 232 1462 774" className="block">
        <defs>
          <linearGradient id="gray-fillet" x1="0" x2="1" y1="0" y2="0">
            <stop offset="0" stopColor="#8f8f8f" />
            <stop offset="1" stopColor="#f6f6f6" />
          </linearGradient>
        </defs>
        <polygon points="930,738 1881,479 1881,497 927,755" fill="#e33e30" />
        <polygon points="927,755 1881,497 1881,503 928,761" fill="#ff6a5c" />
        <polygon points="928,761 1881,503 1881,558 936,815" fill="#ff4c3f" />
        <polygon points="936,815 1881,558 1881,563 937,820" fill="#c73228" />
        <path d="M894 748L927 754L937 820L916 818Q906 816 903 809Z" fill="#f94a3d" stroke="#e53a2e" strokeWidth="2" strokeLinejoin="round" />
        <path d="M900 756L924 760L933 812" fill="none" stroke="#d93a2e" strokeWidth="1" />
        <polygon points="908,805 920,798 933,812 916,811" fill="#e8483c" />
        <polygon points="809,232 836,232 923,752 895,748" fill="#9c9c9c" />
        <polygon points="836,232 846,232 933,750 923,752" fill="url(#gray-fillet)" />
        <polygon points="846,232 894,232 975,738 933,750" fill="#f2f2f2" />
        <polygon points="894,232 900,232 983,736 975,738" fill="#dcdcdc" />
        <path d="M809 232L895 748M836 232L923 752" stroke="#444" strokeWidth=".8" fill="none" />
        <path d="M846 232L933 750M894 232L975 738" stroke="#333" strokeWidth=".8" strokeDasharray="8 1" fill="none" />
        <g fill="none" stroke="#bdbdbd" strokeWidth="1">
          <path d="M492 883L526 875L547 878L553 918L517 927L496 924ZM492 883L512 888L517 927M512 888L547 878" />
        </g>
        <polygon points="516,881 512,846 507,848 510,833 516,847 518,846 520,881" fill="#0a3fe0" />
        <polygon points="549,891 570,882 568,879 582,884 572,893 571,889 550,898" fill="#2f9a3a" />
        <polygon points="531,899 545,903 547,899 556,907 545,914 545,909 532,906" fill="#b42a2a" />
        <text x="505" y="829" fontSize="12" fill="#7a8bf0" fontFamily="Liberation Sans">Z</text>
        <text x="586" y="887" fontSize="12" fill="#3b9a44" fontFamily="Liberation Sans">Y</text>
        <text x="557" y="914" fontSize="12" fill="#e03a3a" fontFamily="Liberation Sans">X</text>
      </svg>
      <div className="absolute left-[556px] top-[562px] flex h-[43px] w-[378px] items-center gap-[4px] border border-[#c4c4c4] bg-white/90 pl-[4px] text-[15px] leading-[20px] tracking-[.25px] text-[#5a6f8a] shadow-[2px_3px_3px_rgba(0,0,0,.25)]">
        <svg width="13" height="14" viewBox="0 0 13 14" className="shrink-0" stroke="#b8923a" strokeWidth=".7">
          <polygon points="1,4 7,1 12,4 12,10 6,13 1,10" fill="#f8e08a" />
          <polygon points="1,4 6,6 12,4 7,1" fill="#fdf3c4" />
        </svg>
        <div className="whitespace-nowrap">
          <div>C:\ProgramData\Structure_00_Member_Square</div>
          <div>Tube_39.prt 在 C:\ProgramData\Design_00.prt 中</div>
        </div>
      </div>
    </div>
  );
}

function RightRail() {
  return (
    <div className="flex w-[38px] shrink-0 flex-col items-center bg-white pt-[9px]">
      <div className="flex h-[34px] items-center">
        <Svg size={28}>
          <polygon points="4,32 24,22 44,32 24,44" fill="#ccc" stroke="#555" />
          <path d="M12 8C12 2 34 2 34 8V22C34 28 12 28 12 22Z" fill="#ef8a15" stroke="#b25a05" />
          <WrenchMark />
        </Svg>
      </div>
      <div className="flex h-[34px] items-center"><Svg size={26}><path d="M1 47L47 1" stroke="#17a5cf" strokeWidth="2" /></Svg></div>
      <div className="flex h-[34px] items-center"><YIcon size={26} right={ORANGE} node={ORANGE} /></div>
      <div className="flex h-[34px] items-center"><YIcon size={26} left={ORANGE} right={ORANGE} down={ORANGE} node={ORANGE} wrench /></div>
      <div className="flex h-[34px] items-center"><FrameIcon plus size={26} /></div>
      <div className="flex h-[34px] items-center"><div className="h-[24px] w-[24px] rounded-full border-2 border-[#17a5cf]" /></div>
      <div className="flex h-[34px] items-center"><LibraryIcon size={26} /></div>
      <div className="flex h-[34px] items-center">
        <Svg size={26}>
          <rect x="1" y="1" width="46" height="46" fill="#fff" stroke="#333" strokeWidth="2" />
          <path d="M1 8H47M8 14L18 24M8 14V21M8 14H15M40 14L30 24M40 14V21M40 14H33M8 42L18 32M8 42V35M8 42H15M40 42L30 32M40 42V35M40 42H33" fill="none" stroke="#333" strokeWidth="1.500" />
        </Svg>
      </div>
      <div className="flex h-[34px] items-center"><div className="h-[16px] w-[24px] border-2 border-[#17a5cf]" /></div>
      <div className="flex h-[34px] items-center"><FastenerIcon size={26} /></div>
      <div className="mt-[7px] h-[2px] w-[30px] bg-[#d8d8d8]" />
      <div className="mb-[6px] mt-auto mr-[11px] h-0 w-0 border-y-[4px] border-r-[5px] border-y-transparent border-r-[#222]" />
    </div>
  );
}

function Taskbar() {
  const under = 'border-b-[3px] border-[#0078d4]';
  return (
    <div className="relative flex h-[50px] shrink-0 bg-[linear-gradient(90deg,#cfe5ed,#d0e3ec_50%,#d4dfec)] text-[#111]">
      <div className="flex w-[60px] items-center justify-center">
        <svg width="20" height="20" viewBox="0 0 20 20" fill="#000">
          <path d="M0 3L8.500 1.800V9.500H0ZM9.500 1.600L20 0V9.500H9.500ZM0 10.500H8.500V18.200L0 17ZM9.500 10.500H20V20L9.500 18.400Z" />
        </svg>
      </div>
      <div className="relative flex w-[360px] items-center overflow-hidden border border-[#c8c8c8] bg-white pl-[14px] text-[19px]">
        <svg width="22" height="22" viewBox="0 0 22 22" fill="none" stroke="#222" strokeWidth="1.300">
          <circle cx="13" cy="9" r="7" />
          <path d="M8 14L1 21" />
        </svg>
        <span className="ml-[14px]">搜索</span>
        <svg width="96" height="50" viewBox="0 0 96 50" className="absolute right-0 top-0">
          <defs>
            <radialGradient id="glow"><stop offset="0" stopColor="#f7c6e4" /><stop offset="1" stopColor="#fff" /></radialGradient>
          </defs>
          <ellipse cx="48" cy="26" rx="46" ry="26" fill="url(#glow)" />
          <circle cx="32" cy="18" r="6" fill="#f6c84a" />
          <path d="M24 28L46 14L56 18L68 12L96 16V30Z" fill="#3c5596" />
          <path d="M1 50C8 36 20 28 40 30H96V50Z" fill="#d5dff2" />
          <path d="M26 36L50 22L64 38L50 44Z" fill="#a8a7dc" />
          <path d="M72 40L96 32V50H76Z" fill="#f2cfe6" />
        </svg>
      </div>
      <div className="flex w-[69px] items-center justify-center pr-[6px]">
        <svg width="20" height="20" viewBox="0 0 20 20" fill="none" stroke="#222" strokeWidth="1.300">
          <path d="M0 1H12M0 19H12M1 6H11V14H1ZM17 1V6M17 9V11M17 14V19" />
        </svg>
      </div>
      <div className={`flex w-[51px] items-center justify-center ${under}`}>
        <svg width="32" height="32" viewBox="0 0 32 32">
          <defs>
            <linearGradient id="edge" x1="0" x2="1" y1="0" y2="1">
              <stop offset="0" stopColor="#39c6a8" />
              <stop offset="1" stopColor="#0a5fb4" />
            </linearGradient>
          </defs>
          <circle cx="16" cy="16" r="15" fill="url(#edge)" />
          <path d="M7 20C6 11 22 7 27 17C22 13 15 14 15 19C15 24 23 26 28 22C24 31 9 31 7 20Z" fill="#e6f6f4" />
        </svg>
      </div>
      <div className="flex w-[11px]" />
      <div className={`flex w-[51px] items-center justify-center ${under}`}>
        <svg width="30" height="28" viewBox="0 0 30 28">
          <path d="M1 2H12L14 5H1Z" fill="#e8a820" />
          <rect x="1" y="5" width="28" height="22" fill="#fcd56b" />
          <rect x="9" y="14" width="12" height="13" fill="#1f7fc8" />
          <rect x="12" y="19" width="6" height="8" fill="#fcd56b" />
        </svg>
      </div>
      <div className="flex w-[11px]" />
      <div className={`flex w-[51px] items-center justify-center ${under}`}>
        <div className="flex h-[30px] w-[30px] items-center justify-center bg-[#8c1109] font-['Liberation_Sans'] text-[14px] font-bold text-white shadow-[-3px_3px_0_#0d8f96]">NX</div>
      </div>
      <div className="ml-[729px] flex items-center">
        <svg width="32" height="36" viewBox="0 0 32 36">
          <ellipse cx="10" cy="15" rx="9" ry="6" fill="#bcd6ec" />
          <path d="M3 24C6 33 18 34 23 28C14 30 9 28 8 21Z" fill="#f39a2a" />
          <ellipse cx="21" cy="24" rx="10" ry="6" fill="#a9cdea" />
          <circle cx="21" cy="8" r="7" fill="#d63a2c" />
          <text x="21" y="12" fontSize="10" fill="#fff" textAnchor="middle" fontFamily="Liberation Sans">1</text>
        </svg>
        <span className="ml-[9px] text-[18px] leading-none">2°C</span>
        <span className="ml-[11px] text-[18px] leading-none">局部多云</span>
        <svg width="18" height="10" viewBox="0 0 18 10" className="ml-[30px]" fill="none" stroke="#222" strokeWidth="1.200"><path d="M1 9L9 1L17 9" /></svg>
        <svg width="20" height="12" viewBox="0 0 20 12" className="ml-[10px]"><rect x="3" y="2" width="16" height="9" fill="#111" /><rect x="0" y="4" width="3" height="5" fill="#111" /></svg>
        <svg width="20" height="20" viewBox="0 0 20 20" className="ml-[11px]" fill="none" stroke="#222" strokeWidth="1.100">
          <circle cx="10" cy="10" r="9" />
          <ellipse cx="10" cy="10" rx="4" ry="9" />
          <path d="M1 7H19M1 13H19" />
          <circle cx="15" cy="15" r="4" fill="#d3e0ec" />
        </svg>
        <svg width="18" height="16" viewBox="0 0 18 16" className="ml-[10px]" fill="none" stroke="#222" strokeWidth="1.100">
          <path d="M1 5H4L8 1V15L4 11H1ZM12 6L17 11M17 6L12 11" />
        </svg>
        <span className="ml-[9px] text-[18px] leading-none">中</span>
        <span className="ml-[17px] flex h-[20px] w-[20px] items-center justify-center border border-[#222] bg-white text-[13px] leading-none">拼</span>
      </div>
      <div className="ml-[21px] flex w-[78px] flex-col items-center justify-center text-[14px] leading-[24px]">
        <span>21:03</span>
        <span>2023/12/1</span>
      </div>
      <div className="ml-[24px] flex items-center">
        <svg width="20" height="18" viewBox="0 0 20 18"><path d="M0 0H20V14H8L5 18V14H0Z" fill="#111" /><path d="M4 4H16M4 7H16M4 10H12" stroke="#fff" /></svg>
      </div>
      <div className="absolute right-[3px] top-[27px] whitespace-nowrap text-[14px] leading-[20px] text-white [text-shadow:0_0_1px_#333,0_0_1px_#333]">UG爱好者论坛@nanhai1803</div>
    </div>
  );
}

export default function App() {
  return (
    <div className="flex h-[1080px] w-[1920px] flex-col overflow-hidden bg-white font-['Noto_Sans','Noto_Sans_CJK_SC',sans-serif]">
      <div className="shrink-0 bg-[linear-gradient(90deg,#03658c,#0678a4)]">
        <TitleBar />
        <MenuBar />
      </div>
      <Ribbon />
      <div className="flex h-[805px] shrink-0 border-b-2 border-[#b0b0b0]">
        <LeftRail />
        <Navigator />
        <div className="flex min-w-0 flex-1 flex-col">
          <Tabs />
          <Canvas />
        </div>
        <RightRail />
      </div>
      <div className="h-[23px] shrink-0 whitespace-nowrap bg-white pl-[933px] text-[14px] font-bold leading-[23px] tracking-[.18px] text-[#111]">
        C:\ProgramData\Structure_00_Member_Square Tube_39.prt 在 C:\ProgramData\Design_00.prt 中
      </div>
      <Taskbar />
    </div>
  );
}
